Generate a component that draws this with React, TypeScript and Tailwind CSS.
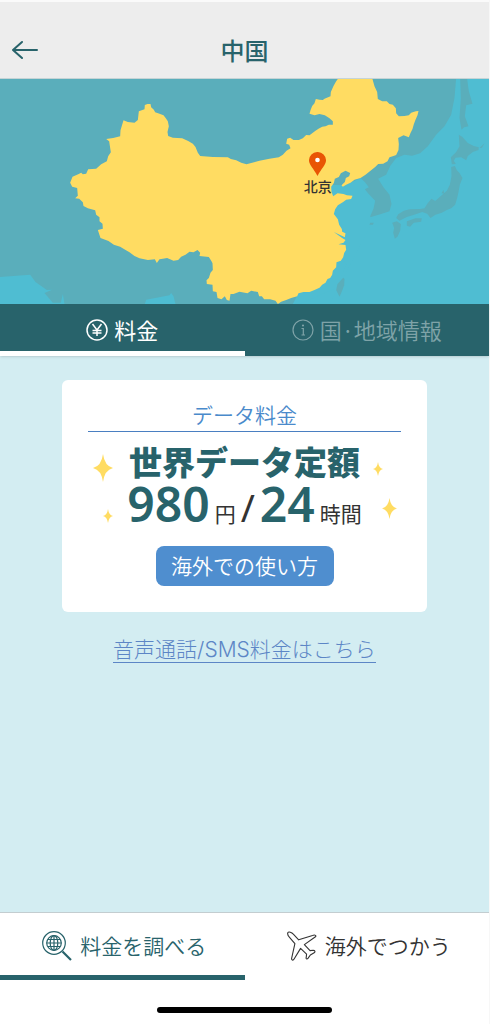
import { ReactNode } from 'react';

const priceParts = [
  { text: '980', className: "font-['Noto_Sans',sans-serif] text-[48px] leading-[44px] font-semibold text-[#28636b]" },
  { text: '円', className: 'text-[21px] leading-5 text-[#333333]' },
  { text: '/', className: "font-['Noto_Sans',sans-serif] text-[38px] leading-9 text-[#333333]" },
  { text: '24', className: "font-['Noto_Sans',sans-serif] text-[48px] leading-[44px] font-semibold text-[#28636b]" },
  { text: '時間', className: 'text-[21px] leading-5 text-[#333333]' },
];

function Sparkle({ className }: { className: string }) {
  return (
    <svg viewBox="0 0 20 28" className={`absolute fill-[#ffdc62] ${className}`} aria-hidden="true">
      <path d="M10 0 Q11.6 12 20 14 Q11.6 16 10 28 Q8.4 16 0 14 Q8.4 12 10 0Z" />
    </svg>
  );
}

function Map() {
  return (
    <div className="relative h-[225px] overflow-hidden bg-[#4fbdd2]">
      <svg viewBox="0 3 1470 675" preserveAspectRatio="xMidYMid slice" className="w-full h-full" aria-hidden="true">
        {/* Neighbouring land */}
        <g fill="#5aaebb">
          <path d="M0 0 H1370 L1365 60 L1355 110 L1335 145 L1310 170 L1285 205 L1262 226 L1238 233 L1215 230 L1190 240 L1172 264 L1160 290 L1136 302 L1152 328 L1170 350 L1176 378 L1170 400 L1145 408 L1112 418 L1000 400 L900 640 L880 678 H528 L522 655 L515 645 L510 652 L440 665 L436 678 H195 L190 648 L184 674 L160 674 L135 645 L158 635 L142 636 L108 612 L92 590 L0 597Z" />
          <path d="M1382 3 L1403 3 L1408 40 L1419 77 L1400 82 L1396 115 L1407 145 L1394 148 L1386 155 L1380 120 L1384 60Z" />
          <path d="M1378 170 L1388 176 L1405 195 L1423 204 L1438 208 L1437 216 L1420 222 L1405 234 L1400 247 L1385 238 L1368 239 L1363 248 L1369 258 L1357 259 L1354 238 L1370 222 L1380 205Z" />
          <path d="M1355 267 L1366 264 L1372 277 L1380 285 L1389 300 L1381 320 L1377 342 L1373 360 L1367 380 L1355 391 L1342 396 L1327 404 L1308 410 L1293 420 L1283 407 L1268 402 L1242 411 L1222 417 L1200 428 L1190 420 L1196 409 L1213 398 L1230 394 L1262 393 L1275 391 L1285 375 L1296 362 L1307 369 L1325 353 L1342 338 L1351 320 L1356 295Z" />
          <path d="M1222 430 L1248 421 L1267 421 L1265 431 L1243 434 L1232 446 L1222 443Z" />
          <path d="M1178 434 L1192 430 L1204 438 L1202 458 L1194 476 L1186 482 L1181 464 L1184 450Z" />
          <path d="M1326 346 L1332 335 L1334 347Z M1440 210 L1455 196 L1447 209Z" />
        </g>

        {/* Bohai Bay and the Yellow Sea coast */}
        <path fill="#4fbdd2" d="M1083 300 L1035 322 L985 320 L985 440 L1040 560 L1010 630 L900 678 H990 L1120 430 L1112 415 L1122 392 L1127 368 L1105 345 L1096 334 L1108 328 L1096 312Z" />

        {/* Islands */}
        <g fill="#5aaebb">
          <path d="M1031 599 L1035 603 L1034 622 L1026 643 L1020 656 L1010 636 L1014 618Z" />
          <path d="M1112 434 L1123 434 L1120 440 L1110 440Z" />
        </g>

        {/* China */}
        <path
          fill="#ffdc62"
          d="M444 78 L453 78 L455 88 L463 95 L467 103 L480 107 L492 112 L499 121 L505 130 L508 145 L504 162 L506 174 L520 179 L548 181 L566 189 L580 197 L588 207 L595 224 L602 234 L640 237 L685 238 L694 243 L710 247 L725 254 L741 259 L755 255 L780 248 L810 242 L838 238 L850 230 L861 218 L873 211 L869 200 L860 197 L863 182 L872 179 L882 186 L898 186 L910 181 L920 171 L930 172 L940 164 L948 158 L957 152 L968 146 L978 145 L988 140 L1000 140 L1000 130 L990 121 L976 112 L960 108 L945 112 L930 107 L933 97 L938 84 L945 76 L949 63 L960 65 L970 66 L975 62 L993 55 L994 42 L1002 24 L1010 10 L1017 0 H1118 L1125 25 L1133 42 L1135 63 L1148 70 L1162 70 L1170 78 L1180 80 L1189 91 L1190 106 L1198 115 L1215 114 L1228 112 L1235 104 L1249 100 L1257 99 L1254 112 L1248 125 L1243 139 L1239 153 L1233 165 L1228 178 L1212 172 L1196 180 L1198 198 L1197 216 L1190 231 L1182 234 L1170 238 L1164 250 L1151 257 L1136 258 L1127 267 L1112 279 L1098 290 L1083 300 L1065 305 L1053 314 L1040 320 L1030 326 L1026 322 L1036 312 L1039 300 L1049 295 L1052 285 L1038 278 L1024 286 L1018 297 L1006 302 L1003 315 L995 326 L996 341 L1001 355 L1014 346 L1032 348 L1042 352 L1059 353 L1055 363 L1040 365 L1031 372 L1015 382 L1007 394 L1003 408 L1015 424 L1019 440 L1027 453 L1028 461 L1038 466 L1036 478 L1003 462 L1028 480 L1038 486 L1032 494 L1017 499 L1038 501 L1040 515 L1034 525 L1031 538 L1024 548 L1011 553 L1010 568 L1000 578 L998 590 L992 600 L984 603 L978 614 L968 620 L960 629 L945 636 L930 642 L912 642 L897 646 L893 655 L875 660 L860 666 L845 671 L835 678 L828 668 L812 664 L794 664 L787 655 L779 655 L775 642 L755 638 L744 646 L720 641 L702 648 L693 648 L690 668 L682 666 L676 655 L666 664 L654 660 L651 642 L640 640 L639 620 L622 618 L621 607 L628 600 L633 584 L640 576 L639 556 L636 550 L628 537 L600 534 L602 524 L594 516 L582 523 L570 521 L558 530 L545 536 L536 546 L522 548 L503 540 L490 542 L480 544 L472 555 L466 544 L445 546 L420 541 L405 534 L390 523 L377 515 L362 506 L343 500 L327 489 L303 480 L295 456 L310 452 L309 437 L300 430 L300 418 L290 410 L287 397 L265 391 L252 384 L250 373 L239 362 L227 361 L235 353 L233 330 L218 326 L212 314 L219 296 L236 289 L245 284 L250 289 L260 287 L266 274 L290 272 L305 259 L322 250 L326 235 L334 223 L329 190 L320 183 L341 180 L362 175 L363 157 L372 127 L385 132 L405 134 L415 126 L418 100 L435 94 L436 81Z"
        />
      </svg>
      <div className="absolute left-[65%] top-[73px] -translate-x-1/2 flex flex-col items-center">
        <svg viewBox="0 0 17 24" className="w-[17px] h-6" aria-hidden="true">
          <path fill="#e95504" d="M8.5 0A8.3 8.3 0 0 0 0 8.5C0 12.500 4.500 16.500 8.500 24C12.500 16.500 17 12.500 17 8.500A8.300 8.300 0 0 0 8.500 0Z" />
          <circle cx="8.5" cy="8" r="2.3" fill="#fff" />
        </svg>
        <span className="mt-0.5 text-[14px] leading-4 font-medium text-[#333333]">北京</span>
      </div>
    </div>
  );
}

function YenIcon() {
  return (
    <svg viewBox="0 0 22 22" className="w-[22px] h-[22px]" fill="none" stroke="currentColor" strokeWidth="1.5" aria-hidden="true">
      <circle cx="11" cy="11" r="10" />
      <path d="M6.500 5 L11 11 L15.500 5 M11 11 V17 M6.500 11.500 H15.500 M6.500 14 H15.500" />
    </svg>
  );
}

function InfoIcon() {
  return (
    <svg viewBox="0 0 22 22" className="w-[22px] h-[22px]" fill="none" stroke="currentColor" strokeWidth="1.2" aria-hidden="true">
      <circle cx="11" cy="11" r="10" />
      <path d="M9.500 9.500 H11.300 V16 M9.500 16 H13" />
      <circle cx="11" cy="6.500" r="0.500" fill="currentColor" />
    </svg>
  );
}

function GlobeSearchIcon() {
  return (
    <svg viewBox="0 0 30 30" className="w-[30px] h-[30px]" fill="none" stroke="#28636b" aria-hidden="true">
      <circle cx="12" cy="12" r="11.300" strokeWidth="1.200" />
      <circle cx="12" cy="12" r="7.300" strokeWidth="1.200" />
      <ellipse cx="12" cy="12" rx="3.800" ry="7.300" strokeWidth="1.200" />
      <path d="M12 4.700 V19.300 M4.700 12 H19.300 M6 8.500 H18 M6 15.500 H18" strokeWidth="1.200" />
      <path d="M20.500 20.500 L29 29" strokeWidth="2.200" />
    </svg>
  );
}

function PlaneIcon() {
  return (
    <svg viewBox="124 91 95 95" className="w-[30px] h-[30px]" fill="none" stroke="#333333" strokeWidth="3.500" strokeLinejoin="round" aria-hidden="true">
      <path d="M127 96 C129 92 139 95 144 101 L161 119 L205 105 C213 102 219 106 213 110 L179 134 L197 153 L207 152 C213 152 214 156 210 160 L198 167 L191 177 C187 182 183 179 185 174 L186 164 L167 146 L147 179 C143 186 137 183 139 176 L149 131 L132 111 C127 106 125 100 127 96Z" />
    </svg>
  );
}

function BottomTab({ icon, label, active }: { icon: ReactNode; label: string; active?: boolean }) {
  return (
    <button
      className={`flex-1 h-[67px] pt-1 pl-1 flex items-center justify-center gap-2 border-b-5 text-[21px] font-[350] ${
        active ? 'border-[#28636b] text-[#28636b]' : 'border-transparent text-[#333333]'
      }`}
    >
      {icon}
      <span>{label}</span>
    </button>
  );
}

export default function App() {
  return (
    <div className="min-h-screen flex flex-col bg-[#d3edf2] border-r border-[#f7f7f7] font-['Noto_Sans_CJK_JP',sans-serif]">
      {/* Header */}
      <header className="relative h-[79px] pt-5 flex items-center justify-center bg-[#ededed] border-t-2 border-t-[#fafafa] border-b border-b-[#c5d4d6]">
        <button aria-label="戻る" className="absolute left-3 top-[38px] text-[#28636b]">
          <svg viewBox="0 0 26 20" className="w-[26px] h-5" fill="none" stroke="currentColor" strokeWidth="2" strokeLinecap="round" strokeLinejoin="round" aria-hidden="true">
            <path d="M10 2 L1 10 L10 18 M1 10 H25" />
          </svg>
        </button>
        <h1 className="text-[24px] leading-8 font-medium text-[#28636b]">中国</h1>
      </header>

      <Map />

      {/* Tabs */}
      <div className="flex h-[52px] bg-[#28636b] shadow text-[22px] font-normal">
        <button className="flex-1 flex items-center justify-center gap-1.5 pt-1 border-b-5 border-white text-white">
          <YenIcon />
          <span>料金</span>
        </button>
        <button className="flex-1 flex items-center justify-center gap-1.5 pt-1 border-b-5 border-transparent text-[#7fa3a8] font-[350]">
          <InfoIcon />
          <span className="flex">
            国<span className="w-3 text-center">·</span>地域情報
          </span>
        </button>
      </div>

      {/* Price card */}
      <main className="flex-1 flex flex-col items-center px-[62px] pt-6">
        <section className="relative w-full h-[232px] px-[26px] pt-5 flex flex-col items-center bg-white rounded-md">
          <h2 className="w-full h-8 text-center text-[21px] leading-7 font-[350] text-[#4a8acb] border-b border-b-[#4a7fc1]">データ料金</h2>
          <p className="mt-2 text-[33px] leading-[42px] font-black text-[#28636b]">世界データ定額</p>
          <p className="flex items-baseline gap-[5px] whitespace-nowrap">
            {priceParts.map((part) => (
              <span key={part.text} className={part.className}>
                {part.text}
              </span>
            ))}
          </p>
          <button className="mt-5 w-[178px] h-10 rounded-lg bg-[#4f8ecf] text-[21px] font-[350] text-white">海外での使い方</button>
          <Sparkle className="w-5 h-7 left-[31px] top-[74px]" />
          <Sparkle className="w-[10px] h-[14px] left-[41px] top-[129px]" />
          <Sparkle className="w-[10px] h-[14px] right-[44px] top-[82px]" />
          <Sparkle className="w-[15px] h-[21px] right-[30px] top-[118px]" />
        </section>
        <a
          href="#voice"
          className="mt-[26px] font-[Inter,'Noto_Sans_CJK_JP',sans-serif] text-[21px] leading-6 font-light text-[#5c86c6] border-b border-b-[#5c86c6]"
        >
          音声通話/SMS料金はこちら
        </a>
      </main>

      {/* Bottom navigation */}
      <footer className="bg-white border-t border-t-[#c3cdd0]">
        <nav className="flex">
          <BottomTab icon={<GlobeSearchIcon />} label="料金を調べる" active />
          <BottomTab icon={<PlaneIcon />} label="海外でつかう" />
        </nav>
        <div className="w-[175px] h-[6px] mt-[27px] mb-[11px] mx-auto rounded-full bg-black" />
      </footer>
    </div>
  );
}
